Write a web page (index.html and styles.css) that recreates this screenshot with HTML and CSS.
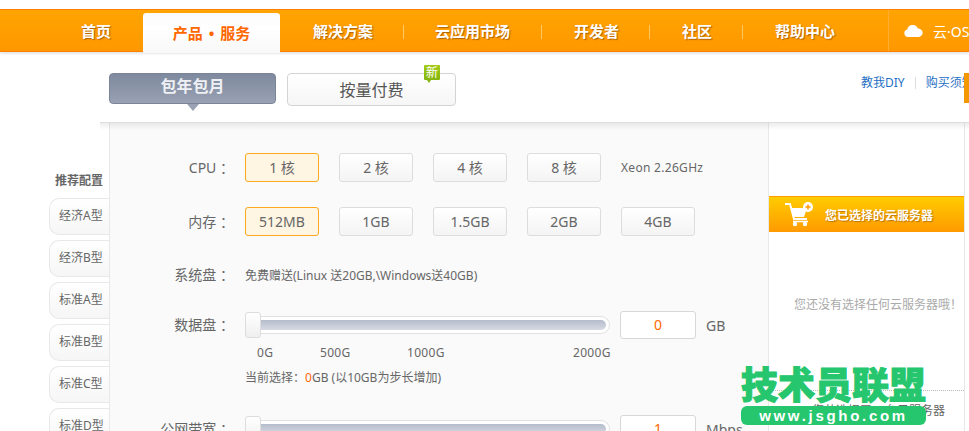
FILE: index.html
```html
<!DOCTYPE html>
<html lang="zh">
<head>
<meta charset="utf-8">
<title>云服务器</title>
<link rel="stylesheet" href="styles.css">
</head>
<body>
<header class="nav">
  <a class="nav-item w-home">首页</a>
  <a class="nav-item nav-active">产品 • 服务</a>
  <a class="nav-item w-sol sep">解决方案</a>
  <a class="nav-item w-mkt sep">云应用市场</a>
  <a class="nav-item w-dev sep">开发者</a>
  <a class="nav-item w-com sep">社区</a>
  <a class="nav-item w-help">帮助中心</a>
  <a class="nav-os">
    <svg class="cloud" width="19" height="13" viewBox="0 0 19 13"><path d="M4 13a3.8 3.8 0 0 1-.7-7.5A4.8 4.8 0 0 1 8.4 1a5.2 5.2 0 0 1 5.4 3.6A4.2 4.2 0 0 1 15 13z" fill="#fff"/></svg>
    <span>云·OS</span>
  </a>
</header>

<div class="tabs-bar">
  <div class="tab tab-on">包年包月</div>
  <div class="tab tab-off">按量付费<span class="new-badge">新</span></div>
  <div class="links"><a>教我DIY</a><i class="link-sep"></i><a>购买须知</a></div>
  <div class="edge-tab"></div>
</div>

<main class="content">
  <aside class="side">
    <h3 class="side-title">推荐配置</h3>
    <a class="side-item">经济A型</a>
    <a class="side-item">经济B型</a>
    <a class="side-item">标准A型</a>
    <a class="side-item">标准B型</a>
    <a class="side-item">标准C型</a>
    <a class="side-item">标准D型</a>
  </aside>

  <section class="config">
    <div class="row row-cpu">
      <label class="lab">CPU ：</label>
      <div class="opts">
        <span class="opt on">1 核</span><span class="opt">2 核</span><span class="opt">4 核</span><span class="opt">8 核</span>
        <span class="note">Xeon 2.26GHz</span>
      </div>
    </div>
    <div class="row row-mem">
      <label class="lab">内存 ：</label>
      <div class="opts">
        <span class="opt on">512MB</span><span class="opt">1GB</span><span class="opt">1.5GB</span><span class="opt">2GB</span><span class="opt">4GB</span>
      </div>
    </div>
    <div class="row row-sys">
      <label class="lab">系统盘 ：</label>
      <span class="free">免费赠送(Linux 送20GB,\Windows送40GB)</span>
    </div>
    <div class="row row-disk">
      <label class="lab">数据盘 ：</label>
      <div class="slider"><i class="track"></i><i class="thumb"></i></div>
      <span class="num">0</span>
      <span class="unit">GB</span>
    </div>
    <div class="scale">
      <span class="s0">0G</span><span class="s1">500G</span><span class="s2">1000G</span><span class="s3">2000G</span>
    </div>
    <p class="current">当前选择：<b>0</b>GB (以10GB为步长增加)</p>
    <div class="row row-band">
      <label class="lab">公网带宽 ：</label>
      <div class="slider"><i class="track"></i><i class="thumb"></i></div>
      <span class="num">1</span>
      <span class="unit">Mbps</span>
    </div>
  </section>

  <aside class="cart">
    <div class="cart-head">
      <svg width="30" height="28" viewBox="0 0 30 28" fill="none">
        <path d="M1 3h5l4 15h13" stroke="#fff" stroke-width="2"/>
        <path d="M7 7h16l-3 9H9z" fill="#fff"/>
        <circle cx="11" cy="23" r="2.2" fill="#fff"/><circle cx="21" cy="23" r="2.2" fill="#fff"/>
        <path d="M9 20.5h15" stroke="#fff" stroke-width="1.6"/>
        <circle cx="24" cy="6" r="5" fill="#fff"/>
        <path d="M21.5 6h5M24 3.5v5" stroke="#f90" stroke-width="1.6"/>
      </svg>
      <span>您已选择的云服务器</span>
    </div>
    <p class="cart-empty">您还没有选择任何云服务器哦！</p>
    <p class="cart-count">您共选择了 <b>0</b> 台云服务器</p>
  </aside>
</main>

<div class="mark">
  <div class="mark-title">技术员联盟</div>
  <div class="mark-url">www.jsgho.com</div>
</div>
</body>
</html>
```
FILE: styles.css
```css
* { box-sizing: border-box; }
html, body { margin: 0; padding: 0; height: 431px; overflow: hidden; background: #fff; }
body { font-family: "Noto Sans", "Noto Sans CJK SC", sans-serif; font-size: 13px; color: #666; padding-top: 9px; position: relative; }

.nav { display: flex; height: 43px; background: linear-gradient(#ffa400, #ff9800); border-top: 1px solid #ff7f00; border-bottom: 1px solid #ff7f00; box-shadow: 0 2px 2px rgba(0,0,0,.1); position: relative; z-index: 3; align-items: center; }
.nav-item { color: #fff; font-size: 15px; font-weight: 700; text-shadow: 1px 1px 1px rgba(120,60,0,.6); line-height: 18px; white-space: nowrap; flex: none; }
.w-home { width: 143px; padding-left: 81px; }
.nav-active { width: 137px; height: 40px; margin-top: 3px; align-self: flex-start; background: linear-gradient(#fafafa, #fff 40%, #f8f8f8); border-radius: 3px 3px 0 0; color: #f60; text-shadow: none; line-height: 40px; text-align: center; word-spacing: 2px; }
.w-sol { width: 124px; padding-left: 33px; }
.w-mkt { width: 138px; padding-left: 31px; }
.w-dev { width: 108px; padding-left: 32px; }
.w-com { width: 93px; padding-left: 32px; }
.w-help { width: 145px; padding-left: 32px; }
.sep { position: relative; }
.sep::after { content: ""; position: absolute; right: 0; top: 3px; width: 1px; height: 14px; background: #ffc766; }
.nav-os { flex: 1; height: 100%; border-left: 1px solid #ffae33; display: flex; align-items: center; gap: 10px; padding-left: 15px; color: #fff; font-size: 14px; white-space: nowrap; overflow: hidden; }
.cloud { flex: none; }

.tabs-bar { display: flex; height: 71px; padding: 21px 0 0 109px; position: relative; z-index: 2; background: #fff; }
.tabs-bar::after { content: ""; position: absolute; left: 100px; right: 0; top: 100%; height: 7px; margin-top: -1px; border-top: 1px solid #ddd; background: linear-gradient(rgba(0,0,0,.07), rgba(0,0,0,0)); }
.tab { border-radius: 4px; font-size: 16px; text-align: center; }
.tab-on { width: 167px; height: 31px; background: linear-gradient(#7f8a9e, #99a1b3); border: 1px solid #7a8598; color: #eef0f4; font-weight: 700; line-height: 25px; position: relative; }
.tab-on::after { content: ""; position: absolute; left: 77px; bottom: -8px; border: 6px solid transparent; border-bottom-width: 0; border-top: 7px solid #99a1b3; }
.tab-off { width: 169px; height: 33px; margin-left: 11px; background: linear-gradient(#fff, #f6f6f6); border: 1px solid #d4d4d4; color: #555; line-height: 33px; position: relative; }
.new-badge { position: absolute; left: 136px; top: -9px; width: 16px; height: 15px; border-radius: 1px; background: linear-gradient(#a6cc1a, #84b50f); color: #fff; font-size: 12px; line-height: 15px; text-align: center; }
.new-badge::after { content: ""; position: absolute; left: 3px; top: 100%; border: 2px solid transparent; border-top: 3px solid #84b50f; border-bottom: 0; }
.links { position: absolute; left: 861px; top: 22px; display: flex; align-items: center; color: #1f6fc4; font-size: 12px; white-space: nowrap; line-height: 18px; }
.link-sep { width: 1px; height: 12px; background: #ddd; margin: 0 10px; }
.edge-tab { position: absolute; right: 0; top: 21px; width: 5px; height: 30px; background: #f39800; }

.content { display: flex; height: 309px; overflow: hidden; }
.side { width: 109px; padding: 49px 0 0 49px; flex: none; }
.side-title { margin: 0 0 9px 6px; font-size: 12px; line-height: 17px; font-weight: 700; color: #666; }
.side-item { display: block; width: 60px; height: 37px; margin-bottom: 5px; border: 1px solid #e8e8e8; border-right: 0; border-radius: 10px 0 0 10px; background: linear-gradient(#fff, #f6f6f6); font-size: 12px; line-height: 33px; padding-left: 9px; color: #666; white-space: nowrap; }

.config { width: 660px; flex: none; background: #fafafa; border-left: 1px solid #e8e8e8; border-right: 1px solid #e8e8e8; padding-top: 30px; }
.row { display: flex; align-items: center; }
.lab { width: 124px; margin-right: 11px; text-align: right; font-size: 14px; color: #666; flex: none; line-height: 18px; white-space: nowrap; }
.opts { display: flex; gap: 20px; align-items: center; }
.opt { width: 74px; height: 29px; border: 1px solid #ddd; border-radius: 3px; background: linear-gradient(#fff, #f4f4f4); text-align: center; line-height: 27px; font-size: 14px; color: #666; }
.opt.on { background: #fff5e3; border-color: #fca91e; }
.note { font-size: 12px; letter-spacing: .3px; color: #666; }
.row-mem { margin-top: 25px; }
.row-sys { margin-top: 29px; height: 20px; }
.free { font-size: 12px; color: #666; white-space: nowrap; }
.row-disk { margin-top: 26px; height: 28px; }
.slider { width: 365px; height: 26px; position: relative; flex: none; }
.track { display: block; position: absolute; left: 0; right: 0; top: 4px; height: 18px; border: 1px solid #e2e2e2; border-radius: 9px; background: #fff; }
.track::after { content: ""; position: absolute; left: 3px; right: 3px; top: 3px; height: 10px; border-radius: 5px; background: linear-gradient(#b5bccb, #d6dae3); }
.thumb { position: absolute; left: 0; top: 0; width: 16px; height: 26px; border: 1px solid #ddd; border-radius: 3px; background: linear-gradient(#fff, #efefef); }
.num { width: 76px; height: 28px; margin-left: 10px; background: #fff; border: 1px solid #d8d8d8; border-radius: 3px; text-align: center; line-height: 26px; color: #f60; font-size: 14px; flex: none; }
.unit { margin-left: 10px; font-size: 14px; white-space: nowrap; }
.scale { display: flex; height: 18px; margin: 5px 0 0 135px; font-size: 12px; letter-spacing: .3px; line-height: 18px; color: #666; }
.s0 { margin-left: 12px; width: 63px; }
.s1 { width: 87px; }
.s2 { width: 166px; }
.current { margin: 7px 0 0 135px; font-size: 12px; line-height: 18px; color: #666; white-space: nowrap; }
.current b { color: #f60; font-weight: 400; }
.row-band { margin-top: 28px; height: 28px; }

.cart { flex: 1; position: relative; }
.cart::after { content: ""; position: absolute; right: 4px; top: 0; bottom: 0; width: 1px; background: #e8e8e8; }
.cart-head { width: 195px; height: 36px; margin-top: 73px; background: linear-gradient(#ffcc00, #ff9a00); border-top: 1px solid #ff9d00; display: flex; align-items: center; gap: 11px; padding-left: 15px; color: #fff; font-size: 12px; font-weight: 700; text-shadow: 1px 1px 1px rgba(120,60,0,.5); white-space: nowrap; }
.cart-empty { margin: 64px 0 0 25px; font-size: 12px; line-height: 18px; color: #aaa; white-space: nowrap; }
.cart-count { margin: 76px 0 0 0; width: 195px; height: 40px; border-top: 1px dotted #bbb; padding: 11px 0 0 43px; font-size: 12px; line-height: 18px; color: #666; white-space: nowrap; }
.cart-count b { color: #f60; font-weight: 400; }

.mark { position: absolute; left: 741px; top: 364px; width: 185px; z-index: 5; }
.mark-title { font-size: 37px; line-height: 42px; font-weight: 900; color: #25c66d; white-space: nowrap; -webkit-text-stroke: 1px #25c66d; }
.mark-url { height: 19px; border-radius: 6px; background: #25c66d; color: #fff; font-size: 15px; font-weight: 700; line-height: 19px; letter-spacing: 2.7px; text-align: center; white-space: nowrap; font-family: "Liberation Sans", sans-serif; }
```
